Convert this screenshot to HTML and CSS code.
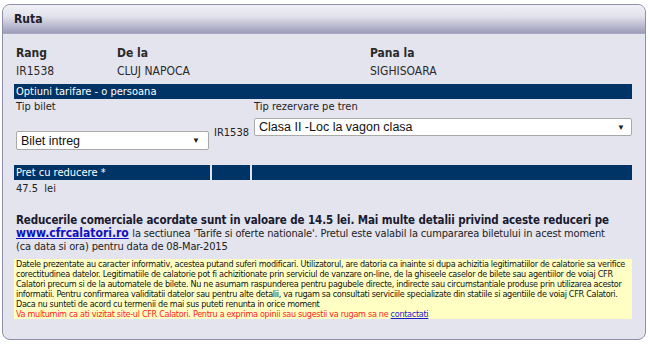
FILE: index.html
```html
<!DOCTYPE html>
<html lang="ro">
<head>
    <meta charset="UTF-8">
    <title>Ruta</title>
    <link rel="stylesheet" href="styles.css">
</head>
<body>
    <div class="panel">
        <div class="panel-head">Ruta</div>
        <div class="panel-body">
            <div class="route">
                <div class="route-th">Rang</div>
                <div class="route-th">De la</div>
                <div class="route-th">Pana la</div>
                <div>IR1538</div>
                <div>CLUJ NAPOCA</div>
                <div>SIGHISOARA</div>
            </div>

            <div class="bar">Optiuni tarifare - o persoana</div>

            <div class="options">
                <div class="opt-ticket">
                    <div class="opt-label">Tip bilet</div>
                    <div class="select">
                        <span>Bilet intreg</span>
                        <span class="arrow">&#9660;</span>
                    </div>
                </div>
                <div class="opt-train">IR1538</div>
                <div class="opt-class">
                    <div class="opt-label">Tip rezervare pe tren</div>
                    <div class="select">
                        <span>Clasa II -Loc la vagon clasa</span>
                        <span class="arrow">&#9660;</span>
                    </div>
                </div>
            </div>

            <div class="cells">
                <div class="cell cell-price">Pret cu reducere *</div>
                <div class="cell cell-mid"></div>
                <div class="cell cell-rest"></div>
            </div>
            <div class="price">47.5&nbsp;&nbsp;lei</div>

            <p class="discount">Reducerile comerciale acordate sunt in valoare de 14.5 lei. Mai multe detalii privind aceste reduceri pe<br><a href="#">www.cfrcalatori.ro</a> <span class="plain">la sectiunea 'Tarife si oferte nationale'. Pretul este valabil la cumpararea biletului in acest moment<br>(ca data si ora) pentru data de 08-Mar-2015</span></p>

            <div class="notice">
                Datele prezentate au caracter informativ, acestea putand suferi modificari. Utilizatorul, are datoria ca inainte si dupa achizitia legitimatiilor de calatorie sa verifice<br>
                corectitudinea datelor. Legitimatiile de calatorie pot fi achizitionate prin serviciul de vanzare on-line, de la ghiseele caselor de bilete sau agentiilor de voiaj CFR<br>
                Calatori precum si de la automatele de bilete. Nu ne asumam raspunderea pentru pagubele directe, indirecte sau circumstantiale produse prin utilizarea acestor<br>
                informatii. Pentru confirmarea validitatii datelor sau pentru alte detalii, va rugam sa consultati serviciile specializate din statiile si agentiile de voiaj CFR Calatori.<br>
                Daca nu sunteti de acord cu termenii de mai sus puteti renunta in orice moment<br>
                <span class="thanks">Va multumim ca ati vizitat site-ul CFR Calatori. Pentru a exprima opinii sau sugestii va rugam sa ne <a href="#">contactati</a></span>
            </div>
        </div>
    </div>
</body>
</html>
```

FILE: styles.css
```css
body {
    margin: 0;
    padding: 0;
    background-color: #fff;
    font-family: "DejaVu Sans Condensed", "DejaVu Sans", sans-serif;
    font-size: 11px;
    color: #222;
}

.panel {
    margin: 4px 0 0 2px;
    width: 642px;
    height: 334px;
    border: 1px solid #8d8dac;
    border-radius: 8px;
    background-color: #e4e4ee;
    overflow: hidden;
}

.panel-head {
    height: 28px;
    line-height: 29px;
    padding-left: 11px;
    font-weight: bold;
    font-size: 12px;
    color: #1c1c2c;
    background: linear-gradient(#f0f0f6, #e2e2ec 40%, #9c9cba);
    border-bottom: 1px solid #a8a8c4;
}

.panel-body {
    padding: 10px 13px 0 11px;
}

.route {
    display: grid;
    grid-template-columns: 101px 253px 1fr;
    grid-auto-rows: 18px;
    line-height: 18px;
    padding-left: 2px;
    font-size: 12px;
    color: #2a2a2a;
}

.route-th {
    font-weight: bold;
}

.bar {
    background-color: #003366;
    color: #fff;
    height: 15px;
    line-height: 15px;
    padding-left: 2px;
    margin-top: 4px;
}

.options {
    display: grid;
    grid-template-columns: 198px 40px 1fr;
    height: 65px;
    margin-top: 1px;
}

.opt-label {
    line-height: 14px;
    padding-left: 2px;
}

.opt-ticket .select {
    margin: 17px 0 0 2px;
    width: 193px;
    height: 19px;
    padding-right: 8px;
}

.opt-train {
    padding: 26px 0 0 2px;
}

.opt-class .select {
    margin: 4px 0 0 2px;
    height: 18px;
}

.select {
    display: flex;
    justify-content: space-between;
    align-items: center;
    box-sizing: border-box;
    background-color: #fff;
    border: 1px solid #a9a9a9;
    border-radius: 2px;
    padding: 0 6px 0 4px;
    font-family: "Liberation Sans", Arial, sans-serif;
    font-size: 12.5px;
    color: #111;
}

.arrow {
    font-size: 8px;
    color: #222;
}

.cells {
    display: flex;
    gap: 2px;
    height: 15px;
    line-height: 15px;
    color: #fff;
}

.cell {
    background-color: #003366;
    padding-left: 2px;
}

.cell-price {
    width: 194px;
}

.cell-mid {
    width: 36px;
}

.cell-rest {
    flex: 1;
}

.price {
    line-height: 16px;
    padding: 1px 0 0 2px;
}

.discount {
    margin: 17px 0 0 2px;
    line-height: 13px;
    font-weight: bold;
    font-size: 11.5px;
    letter-spacing: -0.1px;
    white-space: nowrap;
    color: #1a1a30;
}

.discount a {
    color: #1010c0;
    font-size: 12px;
    letter-spacing: 0;
}

.discount .plain {
    font-weight: normal;
    font-size: 11px;
    letter-spacing: -0.15px;
    color: #222;
}

.notice {
    margin-top: 6px;
    background-color: #ffffc4;
    padding: 0 2px;
    height: 60px;
    font-size: 9px;
    letter-spacing: -0.3px;
    line-height: 10px;
    white-space: nowrap;
    overflow: hidden;
    color: #111;
}

.thanks {
    color: #ff2222;
}

.thanks a {
    color: #1a1ac8;
}
```
